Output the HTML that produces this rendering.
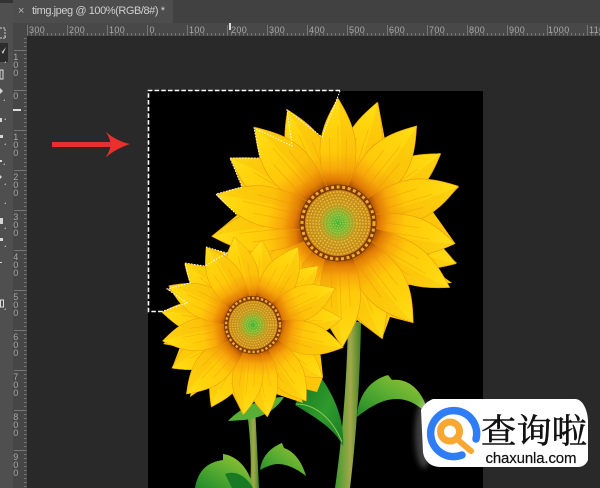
<!DOCTYPE html>
<html><head><meta charset="utf-8"><style>
html,body{margin:0;padding:0;background:#292929;width:600px;height:488px;overflow:hidden}
svg{display:block}
.r{font:9px "Liberation Sans",sans-serif;fill:#a8a8a8;letter-spacing:.4px}
</style></head><body>
<svg width="600" height="488" viewBox="0 0 600 488" xmlns="http://www.w3.org/2000/svg">
<defs>
<linearGradient id="pg" gradientUnits="userSpaceOnUse" x1="0" y1="0" x2="0" y2="-100">
<stop offset="0" stop-color="#8a3c00"/><stop offset=".29" stop-color="#a85204"/><stop offset=".34" stop-color="#e07a05"/><stop offset=".43" stop-color="#f8a80a"/><stop offset=".56" stop-color="#ffc90a"/><stop offset=".8" stop-color="#ffd40c"/><stop offset="1" stop-color="#ffdf1a"/>
</linearGradient>
<linearGradient id="st" x1="0" y1="0" x2="1" y2="0">
<stop offset="0" stop-color="#3c9a2e"/><stop offset=".6" stop-color="#a3a84a"/><stop offset="1" stop-color="#3c8224"/>
</linearGradient>
<linearGradient id="lf" x1="0" y1="0" x2="1" y2="1">
<stop offset="0" stop-color="#0f6b1d"/><stop offset=".6" stop-color="#2f9a2c"/><stop offset="1" stop-color="#1a7a24"/>
</linearGradient>
<linearGradient id="lf2" x1="0" y1="1" x2="1" y2="0">
<stop offset="0" stop-color="#1f8a2a"/><stop offset=".5" stop-color="#5cae32"/><stop offset="1" stop-color="#a4c832"/>
</linearGradient>
<radialGradient id="seed"><stop offset="0" stop-color="#45b53c"/><stop offset=".28" stop-color="#7fb835"/><stop offset=".5" stop-color="#c09a22"/><stop offset="1" stop-color="#c8861a"/></radialGradient>
<pattern id="hx" width="4" height="4" patternUnits="userSpaceOnUse" x="27"><rect x="0" y="0" width="1" height="4" fill="#777"/></pattern>
<pattern id="vx" width="4" height="4" patternUnits="userSpaceOnUse" y="50"><rect x="0" y="0" width="4" height="1" fill="#777"/></pattern>
<g id="p">
<path d="M0,0C-8,-12 -19,-34 -19,-58C-19,-76 -7,-91 0,-100C7,-91 19,-76 19,-58C19,-34 8,-12 0,0Z" fill="url(#pg)" stroke="#e8960a" stroke-width=".5"/>
<path d="M0,-100C7,-91 19,-76 19,-58C19,-34 8,-12 0,0C4,-30 5,-70 0,-100Z" fill="#ee9a05" opacity=".16"/>
<path d="M-8,-38L-9,-68M0,-34L0,-78M8,-38L9,-68" stroke="#e58a05" stroke-width=".8" fill="none" opacity=".35"/>
</g>
</defs>

<!-- chrome -->
<rect width="600" height="488" fill="#292929"/>
<rect width="600" height="23" fill="#414141"/>
<rect x="13" width="160" height="23" fill="#4d4d4d"/>
<rect y="0" width="13" height="488" fill="#4f4f4f"/>
<rect y="0" width="13" height="3" fill="#333"/>
<rect x="13" y="23" width="587" height="13" fill="#484848"/>
<rect x="13" y="23" width="14" height="465" fill="#464646"/>
<rect x="27" y="33" width="573" height="2.5" fill="url(#hx)"/>
<rect x="24" y="36" width="2.500" height="452" fill="url(#vx)"/>
<text x="18" y="14" font-family="Liberation Sans" font-size="11" fill="#b5b5b5">×</text>
<text x="32" y="14" font-family="Liberation Sans" font-size="11" fill="#cfcfcf" textLength="133">timg.jpeg @ 100%(RGB/8#) *</text>

<g stroke="#777" stroke-width="1">
<path d="M27.500 25V35M67.500 25V35M107.500 25V35M147.500 25V35M187.500 25V35M227.500 25V35M267.500 25V35M307.500 25V35M347.500 25V35M387.500 25V35M427.500 25V35M467.500 25V35M507.500 25V35M547.500 25V35M587.500 25V35"/>
<path d="M14 50.500H26M14 90.500H26M14 130.500H26M14 170.500H26M14 210.500H26M14 250.500H26M14 290.500H26M14 330.500H26M14 370.500H26M14 410.500H26M14 450.500H26"/>
</g>
<g class="r">
<text class="r" x="29" y="33">300</text><text class="r" x="69" y="33">200</text><text class="r" x="109" y="33">100</text><text class="r" x="149.500" y="33">0</text><text class="r" x="189" y="33">100</text><text class="r" x="231" y="33">200</text><text class="r" x="269" y="33">300</text><text class="r" x="309" y="33">400</text><text class="r" x="349" y="33">500</text><text class="r" x="389" y="33">600</text><text class="r" x="429" y="33">700</text><text class="r" x="469" y="33">800</text><text class="r" x="509" y="33">900</text><text class="r" x="548" y="33">1000</text><text class="r" x="589" y="33">1100</text>
</g>
<g class="r" text-anchor="middle">
<text class="r" x="16" y="60">1</text><text class="r" x="16" y="68">0</text><text class="r" x="16" y="76">0</text>
<text class="r" x="16" y="99">0</text>
<text class="r" x="16" y="140">1</text><text class="r" x="16" y="148">0</text><text class="r" x="16" y="156">0</text>
<text class="r" x="16" y="180">2</text><text class="r" x="16" y="188">0</text><text class="r" x="16" y="196">0</text>
<text class="r" x="16" y="220">3</text><text class="r" x="16" y="228">0</text><text class="r" x="16" y="236">0</text>
<text class="r" x="16" y="260">4</text><text class="r" x="16" y="268">0</text><text class="r" x="16" y="276">0</text>
<text class="r" x="16" y="300">5</text><text class="r" x="16" y="308">0</text><text class="r" x="16" y="316">0</text>
<text class="r" x="16" y="340">6</text><text class="r" x="16" y="348">0</text><text class="r" x="16" y="356">0</text>
<text class="r" x="16" y="380">7</text><text class="r" x="16" y="388">0</text><text class="r" x="16" y="396">0</text>
<text class="r" x="16" y="420">8</text><text class="r" x="16" y="428">0</text><text class="r" x="16" y="436">0</text>
<text class="r" x="16" y="460">9</text><text class="r" x="16" y="468">0</text><text class="r" x="16" y="476">0</text>
</g>
<rect x="229" y="23" width="2" height="7" fill="#ddd"/>
<rect x="13" y="109" width="8" height="2" fill="#ddd"/>

<!-- toolbar -->
<rect x="0" y="43" width="8" height="19" fill="#2c2c2c"/>
<g fill="#d5d5d5">
<path d="M0 28h5v10H0" fill="none" stroke="#cfcfcf" stroke-width="1" stroke-dasharray="2 1"/>
<path d="M0 49l2 3 4-5-3 7z"/><path d="M0 70h3v9H0z" fill="none" stroke="#ddd"/>
<path d="M0 88l3 3-3 3z"/>
<rect x="0" y="118" width="2" height="4"/><rect x="0" y="135" width="3" height="3"/><rect x="0" y="160" width="2" height="2"/>
<path d="M0 175l2 2-2 2z"/><rect x="0" y="218" width="3" height="6"/><rect x="0" y="238" width="3" height="3"/><rect x="0" y="262" width="2" height="1"/>
<rect x="0.500" y="300" width="3" height="7" fill="none" stroke="#ddd"/>
<path d="M6 36l-2 2h2zM6 61l-2 2h2zM5 99l-2 2h2zM6 118l-2 2h2zM6 143l-2 2h2zM5 163l-2 2h2zM6 183l-2 2h2zM6 202l-2 2h2zM6 227l-2 2h2zM6 245l-2 2h2zM6 308l-2 2h2z" fill="#aaa"/>
</g>

<!-- arrow -->
<path d="M52 142H112V147H52Z" fill="#e63030"/>
<path d="M105.700 131.700C113 138 121 142 130 144C121 147 113 151 105.700 157.500C109 152 110.500 148 110.500 144.500C110.500 140 108.500 136 105.700 131.700Z" fill="#ea2f2d"/>

<!-- image -->
<rect x="148" y="91" width="335" height="397" fill="#000"/>

<!-- stems & leaves -->
<path d="M348 322H361C360 380 356 440 350 488H335C342 440 347 380 348 322Z" fill="url(#st)"/>
<path d="M308 362C330 385 345 415 343 446C335 430 320 420 295 405C300 395 300 385 308 362Z" fill="url(#lf)"/>
<path d="M296 404C315 404 332 418 342 442" stroke="#8ccb55" stroke-width="1" fill="none"/>
<path d="M357 417C358 395 370 380 388 375L392 380C410 378 424 392 429 416C418 404 408 399 396 399C382 399 368 408 357 417Z" fill="url(#lf2)"/>
<path d="M246 405H255L259 488H250C252 460 250 430 246 405Z" fill="url(#st)"/>
<path d="M195 488C198 470 208 462 223 460L223 454C238 456 250 470 253 488Z" fill="url(#lf2)"/>
<path d="M225 474C236 470 246 476 253 488H232Z" fill="#197a26"/>
<path d="M260 470C262 455 272 447 282 443L284 448C296 452 303 465 306 476C296 468 286 464 278 464C272 464 266 467 260 470Z" fill="url(#lf2)"/>
<path d="M228 421C240 408 260 398 284 397C276 410 262 418 244 420Z" fill="#57b035"/>

<!-- big flower -->
<path d="M337 98L357 140L378 102L385 140L417 126L411 158L440 153L427 182L459 187L433 212L455 243L427 235L457 263L430 267L452 283L407 285L413 323L390 317L382 339L357 320L343 347L333 330L260 280L240 240L212 236L237 215L216 194L242 187L230 158L260 158L254 128L292 146L287 110L322 137Z" fill="#ffc60a"/>
<g transform="translate(338 223)">
<use href="#p" transform="rotate(-130) scale(1.05 1.15)"/>
<use href="#p" transform="rotate(-160) scale(1.05 1.15)"/>
<use href="#p" transform="rotate(18) scale(1 1.27)"/>
<use href="#p" transform="rotate(56) scale(1.05 1.24)"/>
<use href="#p" transform="rotate(-24) scale(1.05 1.24)"/>
<use href="#p" transform="rotate(-59) scale(1.1 1.26)"/>
<use href="#p" transform="rotate(-96) scale(1.1 1.27)"/>
<use href="#p" transform="rotate(109) scale(1.05 1.25)"/>
<use href="#p" transform="rotate(159) scale(1.05 1.24)"/>
<use href="#p" transform="rotate(0) scale(.95 1.25)"/>
<use href="#p" transform="rotate(39) scale(1.15 1.25)"/>
<use href="#p" transform="rotate(73) scale(1.1 1.26)"/>
<use href="#p" transform="rotate(100) scale(1.05 1.19)"/>
<use href="#p" transform="rotate(120) scale(1.05 1.29)"/>
<use href="#p" transform="rotate(143) scale(1.15 1.25)"/>
<use href="#p" transform="rotate(178) scale(1.05 1.24)"/>
<use href="#p" transform="rotate(-41) scale(1.15 1.27)"/>
<use href="#p" transform="rotate(-77) scale(1.05 1.25)"/>
<circle r="38.500" fill="#7c3a08"/>
<circle r="36" fill="none" stroke="#f3a832" stroke-width="3" stroke-dasharray="3 2.600"/>
<circle r="33" fill="url(#seed)"/>
<g fill="none" stroke="#f0bf34" stroke-width="1.500" stroke-dasharray="1.600 1.600">
<circle r="31"/><circle r="28"/><circle r="25"/><circle r="22"/><circle r="19"/>
</g>
<g fill="none" stroke="#a8d440" stroke-width="1.100" stroke-dasharray="1.300 1.300">
<circle r="16"/><circle r="13"/><circle r="10"/><circle r="7.500"/><circle r="5"/><circle r="2.500"/>
</g>
</g>

<!-- small flower -->
<path d="M234 237L227 253L206 247L205 266L185 263L190 283L167 289L187 303L162 313L182 328L163 344L180 347L172 368L195 370L190 397L212 382L212 407L232 393L243 415L252 397L267 417L273 393L303 403L297 387L317 392L323 377L320 350L343 347L320 330L342 318L320 305L335 289L305 285L298 247L273 273L262 242L252 263Z" fill="#ffc60a"/>
<g transform="translate(253 325)">
<use href="#p" transform="rotate(6) scale(.85 .85)"/>
<use href="#p" transform="rotate(48) scale(.85 .88)"/>
<use href="#p" transform="rotate(86) scale(.85 .89)"/>
<use href="#p" transform="rotate(127) scale(.85 .87)"/>
<use href="#p" transform="rotate(-153) scale(.85 .92)"/>
<use href="#p" transform="rotate(-118) scale(.85 .92)"/>
<use href="#p" transform="rotate(-82) scale(.85 .92)"/>
<use href="#p" transform="rotate(-48) scale(.85 .92)"/>
<use href="#p" transform="rotate(-12) scale(.85 .9)"/>
<use href="#p" transform="rotate(30) scale(.9 .9)"/>
<use href="#p" transform="rotate(66) scale(.9 .9)"/>
<use href="#p" transform="rotate(104) scale(.85 .93)"/>
<use href="#p" transform="rotate(145) scale(.9 .93)"/>
<use href="#p" transform="rotate(171) scale(.85 .93)"/>
<use href="#p" transform="rotate(-174) scale(.8 .9)"/>
<use href="#p" transform="rotate(-136) scale(.9 .96)"/>
<use href="#p" transform="rotate(-100) scale(.85 .92)"/>
<use href="#p" transform="rotate(-65) scale(.85 .93)"/>
<use href="#p" transform="rotate(-31) scale(.85 .91)"/>
<circle r="29" fill="#7c3a08"/>
<circle r="27" fill="none" stroke="#f3a832" stroke-width="2.400" stroke-dasharray="2.500 2"/>
<circle r="24.500" fill="url(#seed)"/>
<g fill="none" stroke="#f0bf34" stroke-width="1.200" stroke-dasharray="1.300 1.300">
<circle r="23"/><circle r="20.500"/><circle r="18"/><circle r="15.500"/>
</g>
<g fill="none" stroke="#a8d440" stroke-width=".9" stroke-dasharray="1.100 1.100">
<circle r="13"/><circle r="10.500"/><circle r="8"/><circle r="5.500"/><circle r="3"/>
</g>
</g>

<!-- selection -->
<g fill="none">
<path d="M340 90.500H148.500V311.500H165" stroke="#fff" stroke-width="1.600" stroke-dasharray="4.500 2.200"/>
<path d="M340 91L322 137L287 110L292 146L254 128L260 158L230 158L242 187L216 194L237 215M206 247L227 253L205 266L185 263L190 283L167 289L187 303L160 312" stroke="#fff" stroke-width="1" stroke-dasharray="1.500 1.500"/>
</g>

<!-- logo -->
<ellipse cx="424" cy="434" rx="9" ry="34" fill="#fff" opacity=".25" style="filter:blur(3px)"/>
<path d="M433 399H575C582 399 587 408 588 420L588 460C586 465 582 467 578 467H440C430 467 424 460 423 452L421 410C424 404 428 401 433 399Z" fill="#fff"/>
<path d="M476 439A23 23 0 1 0 462 455" fill="none" stroke="#2f7df6" stroke-width="7.500" stroke-linecap="round"/>
<circle cx="450" cy="431.500" r="9.500" fill="none" stroke="#f8a832" stroke-width="7"/>
<path d="M458 440L471 451" stroke="#f8a832" stroke-width="6" stroke-linecap="round"/>
<text x="481" y="443" font-family="'Liberation Sans','Noto Serif CJK SC',serif" font-size="34" fill="#111" stroke="#111" stroke-width=".5" textLength="106" lengthAdjust="spacingAndGlyphs">查询啦</text>
<text x="485.500" y="463" font-family="'Liberation Sans',sans-serif" font-size="15" fill="#111" stroke="#111" stroke-width=".2" textLength="91">chaxunla.com</text>
</svg>
</body></html>
